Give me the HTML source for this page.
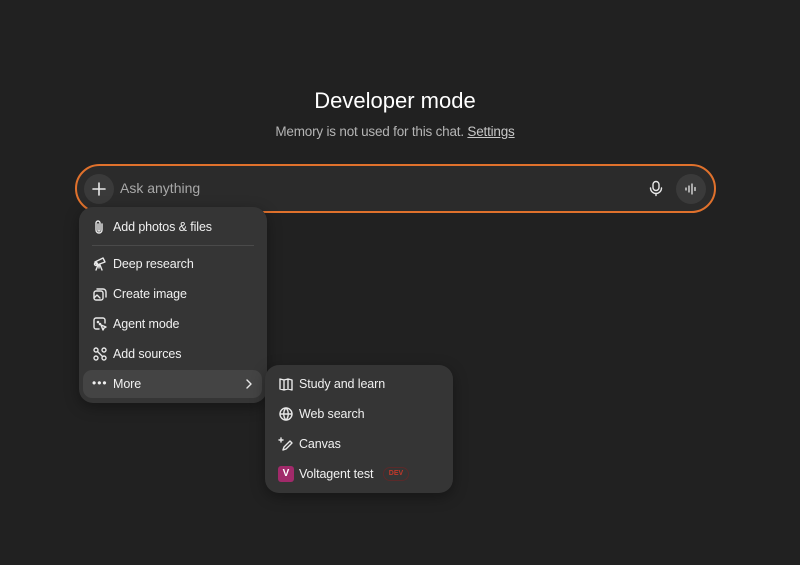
<!DOCTYPE html>
<html><head><style>
body{margin:0;width:800px;height:565px;background:#212121;font-family:"Liberation Sans",sans-serif;color:#ececec;position:relative;overflow:hidden}
.a{position:absolute}
h1{position:absolute;top:88px;left:0;width:800px;text-align:center;font-size:22px;font-weight:500;margin:0;color:#fff;padding-left:-6px}
.sub{top:124px;left:0;width:790px;text-align:center;font-size:13.5px;color:#b4b4b4;letter-spacing:-0.2px}
.sub u{color:#c8c8c8}
.box{left:75px;top:164px;width:637px;height:45px;border:2px solid #e0712c;border-radius:25px;background:#2b2b2b}
.m{background:#353535;border-radius:14px;box-shadow:0 4px 14px rgba(0,0,0,.35)}
.it{position:absolute;font-size:12.5px;color:#f0f0f0;height:20px;line-height:20px;letter-spacing:-0.1px}
svg{position:absolute;fill:none;stroke:#e8e8e8;stroke-width:1.4;stroke-linecap:round;stroke-linejoin:round}
</style></head><body>
<h1 style="left:-5px">Developer mode</h1>
<div class="a sub">Memory is not used for this chat. <u>Settings</u></div>
<div class="a box"></div>
<div class="a" style="left:84px;top:174px;width:30px;height:30px;border-radius:15px;background:#3a3a3a"></div>
<svg style="left:91px;top:181px" width="16" height="16"><path d="M8 2v12M2 8h12" stroke-width="1.6"/></svg>
<div class="a" style="left:120px;top:180px;font-size:14px;color:#a8a8a8">Ask anything</div>
<svg style="left:648px;top:180px" width="16" height="17"><rect x="5" y="1.5" width="6" height="9" rx="3"/><path d="M2.5 8a5.5 5.5 0 0 0 11 0M8 13.5v2"/></svg>
<div class="a" style="left:676px;top:174px;width:30px;height:30px;border-radius:15px;background:#3a3a3a"></div>
<svg style="left:683px;top:181px" width="16" height="16"><path d="M3 7v2M6 5v6M9 3v10M12 6.5v3" stroke-width="1.3"/></svg>

<div class="a m" style="left:79px;top:207px;width:188px;height:196px"></div>
<div class="a" style="left:92px;top:245px;width:162px;height:1px;background:#4a4a4a"></div>
<div class="a" style="left:83px;top:370px;width:179px;height:28px;border-radius:9px;background:#444"></div>
<svg style="left:92px;top:219px" width="14" height="16"><path d="M10 5v6a3 3 0 0 1-6 0V4a2 2 0 0 1 4 0v7a1 1 0 0 1-2 0V5"/></svg>
<div class="it" style="left:113px;top:217px">Add photos &amp; files</div>
<svg style="left:92px;top:256px" width="16" height="16"><path d="M3 6l8-4 2 4-8 3zM6 9l-2 5M8 9l2 5M7 9v3"/><circle cx="4" cy="8" r="1.5"/></svg>
<div class="it" style="left:113px;top:254px">Deep research</div>
<svg style="left:92px;top:286px" width="16" height="16"><rect x="2" y="5" width="9" height="9" rx="2"/><path d="M5 3h6a3 3 0 0 1 3 3v5M2 12l3-3 3 3"/></svg>
<div class="it" style="left:113px;top:284px">Create image</div>
<svg style="left:92px;top:316px" width="16" height="16"><path d="M13 7V4a2 2 0 0 0-2-2H4a2 2 0 0 0-2 2v7a2 2 0 0 0 2 2h3M9 9l5 2-2 1-1 2z"/><circle cx="6" cy="6" r=".6"/><circle cx="8" cy="8" r=".6"/></svg>
<div class="it" style="left:113px;top:314px">Agent mode</div>
<svg style="left:92px;top:346px" width="16" height="16"><circle cx="4" cy="4" r="2"/><circle cx="12" cy="4" r="2"/><circle cx="4" cy="12" r="2"/><circle cx="12" cy="12" r="2"/><path d="M5.5 5.5l5 5"/></svg>
<div class="it" style="left:113px;top:344px">Add sources</div>
<div class="it" style="left:92px;top:373px;font-size:12px;letter-spacing:1px">•••</div>
<div class="it" style="left:113px;top:374px">More</div>
<svg style="left:244px;top:378px" width="10" height="12"><path d="M3 2l4 4-4 4"/></svg>

<div class="a m" style="left:265px;top:365px;width:188px;height:128px"></div>
<svg style="left:278px;top:376px" width="16" height="16"><path d="M2 3l4 1 4-1 4 1v10l-4-1-4 1-4-1zM6 4v10M10 3v10"/></svg>
<div class="it" style="left:299px;top:374px">Study and learn</div>
<svg style="left:278px;top:406px" width="16" height="16"><circle cx="8" cy="8" r="6"/><path d="M2 8h12M8 2c-3 3-3 9 0 12M8 2c3 3 3 9 0 12"/></svg>
<div class="it" style="left:299px;top:404px">Web search</div>
<svg style="left:278px;top:436px" width="16" height="16"><path d="M5 14l1-3 6-6 2 2-6 6zM3 2v4M1 4h4"/></svg>
<div class="it" style="left:299px;top:434px">Canvas</div>
<div class="a" style="left:278px;top:466px;width:16px;height:16px;border-radius:3px;background:#a12a6a;color:#fff;font-size:10px;font-weight:bold;text-align:center;line-height:16px">V</div>
<div class="it" style="left:299px;top:464px">Voltagent test</div>
<div class="a" style="left:383px;top:467px;width:24px;height:12px;border:1px solid #5a2a2a;border-radius:7px;color:#c0392b;font-size:7px;font-weight:bold;text-align:center;line-height:12px">DEV</div>
</body></html>
